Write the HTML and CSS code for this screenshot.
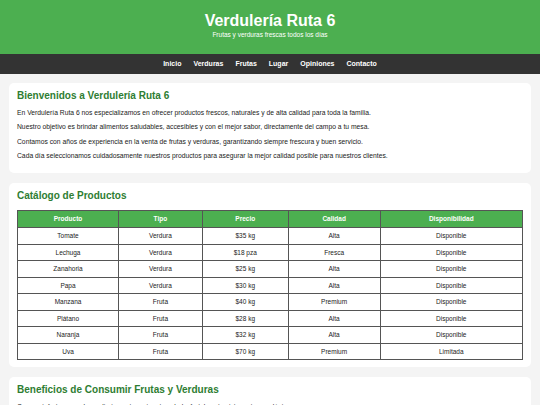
FILE: index.html
```html
<!DOCTYPE html>
<html lang="es">
<head>
<meta charset="utf-8">
<title>Verdulería Ruta 6</title>
<link rel="stylesheet" href="styles.css">
</head>
<body>
<header class="site-header">
  <h1 class="site-title">Verdulería Ruta 6</h1>
  <p class="site-tagline">Frutas y verduras frescas todos los días</p>
</header>
<nav class="site-nav">
  <a href="#inicio">Inicio</a>
  <a href="#verduras">Verduras</a>
  <a href="#frutas">Frutas</a>
  <a href="#lugar">Lugar</a>
  <a href="#opiniones">Opiniones</a>
  <a href="#contacto">Contacto</a>
</nav>
<main class="content">
  <section class="card" id="inicio">
    <h2 class="card-title">Bienvenidos a Verdulería Ruta 6</h2>
    <p>En Verdulería Ruta 6 nos especializamos en ofrecer productos frescos, naturales y de alta calidad para toda la familia.</p>
    <p>Nuestro objetivo es brindar alimentos saludables, accesibles y con el mejor sabor, directamente del campo a tu mesa.</p>
    <p>Contamos con años de experiencia en la venta de frutas y verduras, garantizando siempre frescura y buen servicio.</p>
    <p>Cada día seleccionamos cuidadosamente nuestros productos para asegurar la mejor calidad posible para nuestros clientes.</p>
  </section>
  <section class="card" id="verduras">
    <h2 class="card-title">Catálogo de Productos</h2>
    <table class="catalog">
      <colgroup>
        <col class="c-prod"><col class="c-tipo"><col class="c-precio"><col class="c-cal"><col class="c-disp">
      </colgroup>
      <thead>
        <tr><th>Producto</th><th>Tipo</th><th>Precio</th><th>Calidad</th><th>Disponibilidad</th></tr>
      </thead>
      <tbody>
        <tr><td>Tomate</td><td>Verdura</td><td>$35 kg</td><td>Alta</td><td>Disponible</td></tr>
        <tr><td>Lechuga</td><td>Verdura</td><td>$18 pza</td><td>Fresca</td><td>Disponible</td></tr>
        <tr><td>Zanahoria</td><td>Verdura</td><td>$25 kg</td><td>Alta</td><td>Disponible</td></tr>
        <tr><td>Papa</td><td>Verdura</td><td>$30 kg</td><td>Alta</td><td>Disponible</td></tr>
        <tr><td>Manzana</td><td>Fruta</td><td>$40 kg</td><td>Premium</td><td>Disponible</td></tr>
        <tr><td>Plátano</td><td>Fruta</td><td>$28 kg</td><td>Alta</td><td>Disponible</td></tr>
        <tr><td>Naranja</td><td>Fruta</td><td>$32 kg</td><td>Alta</td><td>Disponible</td></tr>
        <tr><td>Uva</td><td>Fruta</td><td>$70 kg</td><td>Premium</td><td>Limitada</td></tr>
      </tbody>
    </table>
  </section>
  <section class="card" id="frutas">
    <h2 class="card-title">Beneficios de Consumir Frutas y Verduras</h2>
    <p>Consumir frutas y verduras diariamente mejora tu salud y fortalece tu sistema inmunológico.</p>
    <p>Son una fuente natural de vitaminas, minerales y fibra para toda la familia.</p>
  </section>
</main>
</body>
</html>
```
FILE: styles.css
```css
* { box-sizing: border-box; }

html, body {
  margin: 0;
  padding: 0;
}

body {
  font-family: "Liberation Sans", Arial, sans-serif;
  background: #f4f4f4;
  color: #222;
}

.site-header {
  background: #4caf50;
  color: #fff;
  text-align: center;
  padding: 11px 0 15px;
}

.site-title {
  margin: 0;
  font-size: 16px;
  line-height: 19px;
  font-weight: bold;
}

.site-tagline {
  margin: 1px 0 0;
  font-size: 6.5px;
  line-height: 8px;
}

.site-nav {
  background: #333;
  display: flex;
  justify-content: center;
  gap: 12px;
  padding: 6px 0;
}

.site-nav a {
  color: #fff;
  text-decoration: none;
  font-weight: bold;
  font-size: 7px;
  line-height: 8px;
}

.content {
  padding: 9px 9px;
  display: flex;
  flex-direction: column;
  gap: 10px;
}

.card {
  background: #fff;
  border-radius: 5px;
  padding: 7px 8px;
}

.card-title {
  color: #2e7d32;
  font-size: 10px;
  line-height: 12px;
  margin: 0 0 7px;
}

.card p {
  font-size: 6.75px;
  line-height: 7.8px;
  margin: 6.5px 0;
}

.catalog {
  width: 100%;
  border-collapse: collapse;
  font-size: 6.5px;
  margin-top: 8px;
}

.c-prod { width: 20%; }
.c-tipo { width: 16.6%; }
.c-precio { width: 17%; }
.c-cal { width: 18.2%; }
.c-disp { width: 28.2%; }

.catalog th,
.catalog td {
  border: 1px solid #555;
  text-align: center;
  line-height: 7.5px;
  padding: 4px 4px;
}

.catalog th {
  background: #4caf50;
  color: #fff;
  font-weight: bold;
  padding: 4.25px 4px;
}
```
